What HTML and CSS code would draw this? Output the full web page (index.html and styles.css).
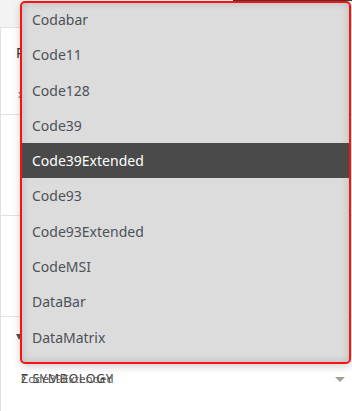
FILE: index.html
```html
<!DOCTYPE html>
<html>
<head>
<meta charset="utf-8">
<link rel="stylesheet" href="styles.css">
</head>
<body>
<div class="panel">
  <div class="topbar"></div>
  <div class="panel-body">
    <section class="sec sec-1">
      <div class="prop-label">Properties</div>
      <div class="prop-value">x</div>
    </section>
    <section class="sec sec-2"></section>
    <section class="sec sec-3"></section>
    <section class="sec sec-4">
      <span class="caret"></span>
      <div class="sym-row">
        <div class="sym-stack">
          <span class="sym-head">Σ SYMBOLOGY</span>
          <span class="sym-value">Code39Extended</span>
        </div>
        <span class="sym-arrow"></span>
      </div>
    </section>
  </div>
</div>

<div class="dropdown">
  <ul class="options">
    <li class="option">Codabar</li>
    <li class="option">Code11</li>
    <li class="option">Code128</li>
    <li class="option">Code39</li>
    <li class="option selected">Code39Extended</li>
    <li class="option">Code93</li>
    <li class="option">Code93Extended</li>
    <li class="option">CodeMSI</li>
    <li class="option">DataBar</li>
    <li class="option">DataMatrix</li>
  </ul>
</div>
</body>
</html>
```

FILE: styles.css
```css
html, body {
  margin: 0;
  padding: 0;
}
body {
  width: 352px;
  height: 411px;
  overflow: hidden;
  background: #ffffff;
  font-family: "Noto Sans", "Open Sans", sans-serif;
  position: relative;
}
.panel {
  display: flex;
  flex-direction: column;
  height: 411px;
}
.topbar {
  height: 27px;
  flex: none;
  background:
    linear-gradient(to right, #f3f3f3 233px, #3c3c3c 233px) top left / 100% 1px no-repeat,
    #f3f3f3;
  border-bottom: 1px solid #e2e2e2;
}
.panel-body {
  flex: 1;
  border-left: 1px solid #e0e0e0;
  display: flex;
  flex-direction: column;
}
.sec {
  border-bottom: 1px solid #e2e2e2;
  padding-left: 15px;
  flex: none;
}
.sec-1 {
  padding-top: 15px;
  height: 71px;
}
.prop-label {
  font-size: 14px;
  line-height: 19px;
  color: #333;
  white-space: nowrap;
}
.prop-value {
  font-size: 11px;
  line-height: 14px;
  color: #666;
  margin-top: 25px;
  padding-left: 2px;
}
.sec-2 {
  height: 100px;
}
.sec-3 {
  height: 100px;
}
.sec-4 {
  border-bottom: none;
  flex: 1;
  padding-left: 0;
  display: flex;
  flex-direction: column;
}
.caret {
  margin-top: 17px;
  margin-left: 15px;
  width: 0;
  height: 0;
  border-left: 3px solid transparent;
  border-right: 3px solid transparent;
  border-top: 6px solid #555;
}
.sym-row {
  margin-top: 31px;
  display: flex;
  align-items: center;
  justify-content: space-between;
  padding-left: 20px;
  padding-right: 7px;
}
.sym-stack {
  display: grid;
}
.sym-head, .sym-value {
  grid-area: 1 / 1;
  white-space: nowrap;
  line-height: 16px;
}
.sym-head {
  font-size: 12.5px;
  letter-spacing: 0.6px;
  color: #3e3e3e;
}
.sym-value {
  font-size: 11.6px;
  color: #5e5e5e;
}
.sym-arrow {
  width: 0;
  height: 0;
  border-left: 5px solid transparent;
  border-right: 5px solid transparent;
  border-top: 5px solid #a3a38f;
}

.dropdown {
  position: absolute;
  left: 20px;
  top: 1px;
  width: 331px;
  height: 363px;
  box-sizing: border-box;
  border: 2px solid #ff1010;
  border-radius: 5px;
  background: #dcdcdc;
  box-shadow: inset 0 0 8px rgba(0, 0, 0, 0.16), 0 3px 8px rgba(0, 0, 0, 0.18);
  overflow: hidden;
}
.options {
  list-style: none;
  margin: -1px 0 0 0;
  padding: 0;
}
.option {
  height: 35.3px;
  line-height: 35.3px;
  padding-left: 10px;
  font-size: 14px;
  color: #4d5159;
  white-space: nowrap;
}
.option.selected {
  background: #4a4a4a;
  color: #ffffff;
}
```
